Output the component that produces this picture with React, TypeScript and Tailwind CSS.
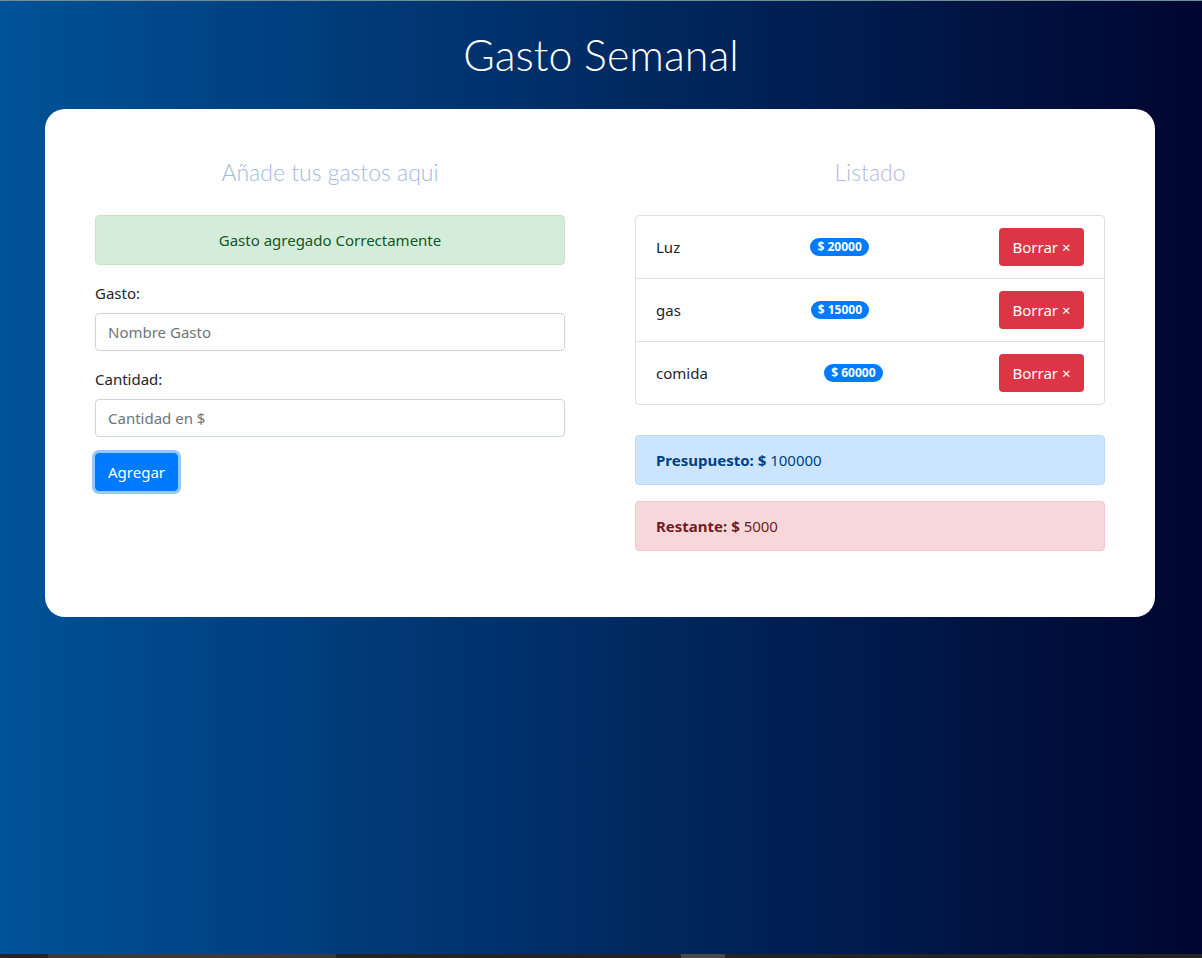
const gastos = [
  { id: 1, nombre: 'Luz', cantidad: 20000 },
  { id: 2, nombre: 'gas', cantidad: 15000 },
  { id: 3, nombre: 'comida', cantidad: 60000 },
];

const body = { fontFamily: '"Noto Sans", "Open Sans", sans-serif' };
const thin = { fontFamily: 'Lato, "Open Sans", sans-serif' };

export default function App() {
  return (
    <div
      className="flex h-[958px] flex-col border-t border-[#6f8f96] bg-gradient-to-r from-[#005299] via-[#002b63] to-[#000630] text-[15px] text-[#212529]"
      style={body}
    >
      <main className="flex-1">
        <h1
          className="pt-[28px] text-center text-[43px] font-light leading-[52px] text-white"
          style={thin}
        >
          Gasto Semanal
        </h1>

        <div className="mx-auto mt-[28px] w-[1110px] -translate-x-px rounded-[20px] bg-white px-[50px] pb-[50px] pt-[50px]">
          <div className="grid grid-cols-2 items-start gap-[70px]">
            {/* formulario */}
            <div>
              <h2
                className="mb-[30px] text-center text-[23px] font-light leading-[26px] text-[#a3b9e3]"
                style={thin}
              >
                Añade tus gastos aqui
              </h2>
              <div className="mb-4 rounded border border-[#c3e6cb] bg-[#d4edda] px-5 py-3 text-center leading-6 text-[#155724]">
                Gasto agregado Correctamente
              </div>
              <div className="mb-4">
                <label className="mb-2 block leading-6">Gasto:</label>
                <input
                  type="text"
                  placeholder="Nombre Gasto"
                  className="block h-[38px] w-full rounded border border-[#ced4da] px-3 placeholder:text-[#6c757d]"
                />
              </div>
              <div className="mb-4">
                <label className="mb-2 block leading-6">Cantidad:</label>
                <input
                  type="text"
                  placeholder="Cantidad en $"
                  className="block h-[38px] w-full rounded border border-[#ced4da] px-3 placeholder:text-[#6c757d]"
                />
              </div>
              <button className="h-[38px] rounded border border-[#007bff] bg-[#007bff] px-3 text-white shadow-[0_0_0_3px_rgba(38,143,255,0.5)]">
                Agregar
              </button>
            </div>

            {/* listado */}
            <div>
              <h2
                className="mb-[30px] text-center text-[23px] font-light leading-[26px] text-[#b3b7e0]"
                style={thin}
              >
                Listado
              </h2>
              <ul className="divide-y divide-[#dfdfdf] rounded border border-[#dfdfdf]">
                {gastos.map((g) => (
                  <li key={g.id} className="flex items-center justify-between px-5 py-3">
                    <span>{g.nombre}</span>
                    <span className="rounded-full bg-[#007bff] px-[7px] py-[2px] text-[12px] font-bold leading-[14px] text-white">
                      $ {g.cantidad}
                    </span>
                    <button className="h-[38px] w-[85px] rounded bg-[#dc3545] text-white">
                      Borrar &times;
                    </button>
                  </li>
                ))}
              </ul>
              <div className="mt-[30px] mb-4 rounded border border-[#b8daff] bg-[#cce5ff] px-5 py-3 leading-6 text-[#004085]">
                <span className="font-bold">Presupuesto: $</span> 100000
              </div>
              <div className="mb-4 rounded border border-[#f5c6cb] bg-[#f8d7da] px-5 py-3 leading-6 text-[#721c24]">
                <span className="font-bold">Restante: $</span> 5000
              </div>
            </div>
          </div>
        </div>
      </main>
      <div className="flex h-[4px] bg-[#242424]">
        <div className="ml-[48px] w-[288px] bg-[#3a3a3a]" />
        <div className="ml-[345px] w-[44px] bg-[#4a4a4a]" />
      </div>
    </div>
  );
}
